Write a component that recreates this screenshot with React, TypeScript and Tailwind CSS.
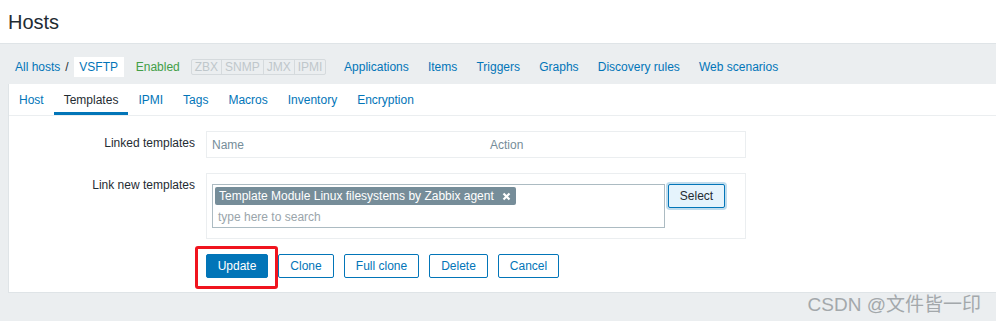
import React from "react";

const hostNav = [
  "Applications",
  "Items",
  "Triggers",
  "Graphs",
  "Discovery rules",
  "Web scenarios",
];

const tabs = ["Host", "Templates", "IPMI", "Tags", "Macros", "Inventory", "Encryption"];

const buttons = [
  { label: "Clone", w: "w-[56px]" },
  { label: "Full clone", w: "w-[75px]" },
  { label: "Delete", w: "w-[59px]" },
  { label: "Cancel", w: "w-[61px]" },
];

export default function App() {
  return (
    <div
      className="h-[321px] w-[996px] overflow-hidden bg-[#ebeef0] text-[12px] text-[#1f2c33]"
      style={{ fontFamily: '"Liberation Sans", Arial, sans-serif' }}
    >
      <header className="flex h-[44px] items-center border-b border-[#dfe4e7] bg-white pl-[8px]">
        <h1 className="text-[20px] leading-none text-[#1f2c33]">Hosts</h1>
      </header>

      {/* host navigation */}
      <nav className="flex h-[40px] items-center pl-[15px] pt-[6px]">
        <a className="text-[#0275b8]">All hosts</a>
        <span className="mx-[5px] text-[#1f2c33]">/</span>
        <span className="flex h-[20px] w-[50px] items-center justify-center bg-white text-[#0275b8]">
          VSFTP
        </span>
        <span className="ml-[12px] text-[#429e47]">Enabled</span>
        <div className="ml-[11px] flex h-[16px] rounded-[2px] border border-[#d5dadd] text-[#bfc7cb]">
          {["ZBX", "SNMP", "JMX", "IPMI"].map((s, i) => (
            <span
              key={s}
              className={`flex items-center px-[3px] leading-none ${i > 0 ? "border-l border-[#d5dadd]" : ""}`}
            >
              {s}
            </span>
          ))}
        </div>
        <div className="ml-[8px] flex">
          {hostNav.map((n) => (
            <a key={n} className="px-[9.6px] text-[#0275b8]">
              {n}
            </a>
          ))}
        </div>
      </nav>

      <main className="ml-[8px] border-b border-l border-[#dfe4e7] bg-white">
        {/* tabs */}
        <ul className="flex h-[32px] border-b border-[#ebeef0]">
          {tabs.map((t) => (
            <li
              key={t}
              className={`flex items-center px-[10px] ${
                t === "Templates"
                  ? "border-b-[3px] border-[#0275b8] pt-[3px] text-[#1f2c33]"
                  : "text-[#0275b8]"
              }`}
            >
              {t}
            </li>
          ))}
        </ul>

        <div className="flex flex-col gap-[15px] pb-[14px] pt-[15px]">
          <div className="flex">
            <label className="w-[186px] text-right leading-[24px]">Linked templates</label>
            <div className="ml-[11px] flex h-[27px] w-[540px] items-center border border-[#ebeef0] px-[5px] text-[#768d99]">
              <span className="w-[278px]">Name</span>
              <span>Action</span>
            </div>
          </div>

          <div className="flex">
            <label className="w-[186px] text-right leading-[24px]">Link new templates</label>
            <div className="ml-[11px] flex w-[540px] items-start border border-[#ebeef0] px-[5px] py-[10px]">
              <div className="h-[44px] w-[453px] border border-[#acbbc2] p-[2px]">
                <span className="inline-flex h-[18px] items-center rounded-[2px] bg-[#768d99] pl-[4px] pr-[5px] text-white">
                  Template Module Linux filesystems by Zabbix agent
                  <svg className="ml-[8px]" width="9" height="9" viewBox="0 0 9 9">
                    <path d="M1.5 1.5 L7.5 7.5 M7.5 1.5 L1.5 7.5" stroke="white" strokeWidth="2.2" />
                  </svg>
                </span>
                <div className="mt-[3px] pl-[3px] text-[#9aa5ab]">type here to search</div>
              </div>
              <button className="ml-[3px] h-[24px] w-[57px] rounded-[2px] border border-[#0275b8] bg-[#e5f3fc] text-[#1f2c33] shadow-[0_0_0_2px_rgba(2,117,184,0.25)]">
                Select
              </button>
            </div>
          </div>

          <div className="ml-[197px] flex gap-[10px]">
            <div className="relative">
              <button className="h-[24px] w-[62px] rounded-[2px] border border-[#0275b8] bg-[#0275b8] text-white">
                Update
              </button>
              <div className="pointer-events-none absolute -left-[11px] -top-[8px] h-[43px] w-[83px] rounded-[3px] border-[3px] border-[#f0141e]" />
            </div>
            {buttons.map((b) => (
              <button
                key={b.label}
                className={`h-[24px] ${b.w} rounded-[2px] border border-[#0275b8] bg-white text-[#0275b8]`}
              >
                {b.label}
              </button>
            ))}
          </div>
        </div>
      </main>

      <div
        className="flex justify-end pr-[15px] pt-[1px] text-[19px] leading-[22px] text-[#a3a8ab]"
        style={{ fontFamily: '"Liberation Sans", "Noto Sans CJK SC", sans-serif' }}
      >
        CSDN @文件皆一印
      </div>
    </div>
  );
}
